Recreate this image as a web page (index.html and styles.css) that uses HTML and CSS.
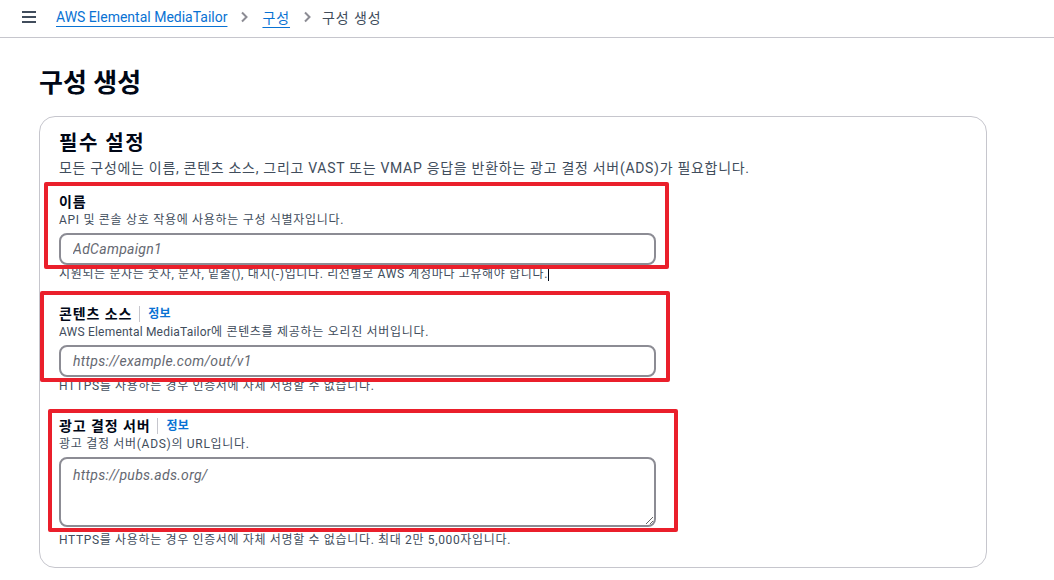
FILE: index.html
```html
<!DOCTYPE html>
<html lang="ko">
<head>
    <meta charset="UTF-8">
    <meta name="viewport" content="width=device-width, initial-scale=1.0">
    <title>구성 생성</title>
    <link rel="stylesheet" href="styles.css">
</head>
<body>
    <header class="topbar">
        <button class="menu-btn" aria-label="메뉴">
            <svg width="16" height="14" viewBox="0 0 16 14">
                <path d="M1 2h14M1 7h14M1 12h14" stroke="#414d5c" stroke-width="2" fill="none"/>
            </svg>
        </button>
        <nav class="breadcrumbs">
            <a href="#">AWS Elemental MediaTailor</a>
            <span class="chevron">
                <svg width="12" height="12" viewBox="0 0 12 12"><path d="M4 1.5l4.5 4.5L4 10.5" stroke="#8c8c94" stroke-width="2" fill="none"/></svg>
            </span>
            <a class="ko" href="#">구성</a>
            <span class="chevron">
                <svg width="12" height="12" viewBox="0 0 12 12"><path d="M4 1.5l4.5 4.5L4 10.5" stroke="#8c8c94" stroke-width="2" fill="none"/></svg>
            </span>
            <span class="current ko">구성 생성</span>
        </nav>
    </header>

    <main class="content">
        <h1 class="page-title">구성 생성</h1>

        <section class="panel">
            <h2 class="panel-title">필수 설정</h2>
            <p class="panel-desc">모든 구성에는 이름, 콘텐츠 소스, 그리고 VAST 또는 VMAP 응답을 반환하는 광고 결정 서버(ADS)가 필요합니다.</p>

            <div class="field">
                <div class="field-main mark mark-name">
                    <label class="field-label" for="name">이름</label>
                    <div class="field-desc">API 및 콘솔 상호 작용에 사용하는 구성 식별자입니다.</div>
                    <input class="text-input" id="name" type="text" placeholder="AdCampaign1">
                </div>
                <div class="field-hint">지원되는 문자는 숫자, 문자, 밑줄(), 대시(-)입니다. 리전별로 AWS 계정마다 고유해야 합니다.<span class="caret"></span></div>
            </div>

            <div class="field">
                <div class="field-main mark mark-source">
                    <div class="field-label">
                        <label for="source">콘텐츠 소스</label>
                        <span class="divider"></span>
                        <a class="info" href="#">정보</a>
                    </div>
                    <div class="field-desc"><span class="latin">AWS Elemental MediaTailor</span>에 콘텐츠를 제공하는 오리진 서버입니다.</div>
                    <input class="text-input" id="source" type="text" placeholder="https://example.com/out/v1">
                </div>
                <div class="field-hint">HTTPS를 사용하는 경우 인증서에 자체 서명할 수 없습니다.</div>
            </div>

            <div class="field">
                <div class="field-main mark mark-ads">
                    <div class="field-label">
                        <label for="ads">광고 결정 서버</label>
                        <span class="divider"></span>
                        <a class="info" href="#">정보</a>
                    </div>
                    <div class="field-desc">광고 결정 서버(ADS)의 URL입니다.</div>
                    <textarea class="text-area" id="ads" placeholder="https://pubs.ads.org/"></textarea>
                </div>
                <div class="field-hint field-hint-area">HTTPS를 사용하는 경우 인증서에 자체 서명할 수 없습니다. 최대 2만 5,000자입니다.</div>
            </div>
        </section>
    </main>
</body>
</html>
```

FILE: styles.css
```css
body {
    margin: 0;
    font-family: Roboto, "Noto Sans CJK KR", sans-serif;
    color: #000716;
    background-color: #fff;
}

.topbar {
    height: 37px;
    border-bottom: 1px solid #c6c6cd;
    display: flex;
    align-items: center;
    padding-left: 21px;
}

.menu-btn {
    border: none;
    background: none;
    padding: 0;
    width: 16px;
    height: 14px;
    display: flex;
    margin-top: -3px;
}

.breadcrumbs {
    display: flex;
    align-items: center;
    margin-left: 19px;
    font-size: 14px;
    margin-top: -3px;
}

.breadcrumbs a {
    color: #0972d3;
    text-decoration: underline;
    text-underline-offset: 4px;
}

.breadcrumbs .ko {
    letter-spacing: 0.9px;
}

.chevron {
    display: flex;
    margin: 0 12px 0 11px;
}

.current {
    color: #414d5c;
    margin-left: -3px;
}

.content {
    padding: 0 39px;
}

.page-title {
    margin: 30px 0 18px;
    font-size: 26px;
    line-height: 30px;
    font-weight: 700;
}

.panel {
    width: 948px;
    box-sizing: border-box;
    border: 1px solid #c6c6cd;
    border-radius: 16px;
    padding: 12px 19px 18px;
}

.panel-title {
    margin: 0;
    font-size: 20px;
    line-height: 28px;
    font-weight: 700;
    letter-spacing: 1.5px;
}

.panel-desc {
    margin: 0 0 14px;
    font-size: 14px;
    line-height: 22px;
    color: #414d5c;
    letter-spacing: 0.7px;
}

.field {
    width: 597px;
    margin-bottom: 22px;
}

.field:last-child {
    margin-bottom: 0;
}

.field-main {
    position: relative;
}

.field-label {
    display: flex;
    align-items: center;
    font-size: 14px;
    line-height: 18px;
    font-weight: 700;
    letter-spacing: 0.9px;
}

.divider {
    width: 1px;
    height: 16px;
    background-color: #c6c6cd;
    margin: 0 8px 0 7px;
}

.info {
    color: #0972d3;
    font-size: 12px;
    letter-spacing: 0.3px;
    text-decoration: none;
}

.field-desc {
    font-size: 12px;
    line-height: 18px;
    color: #414d5c;
    margin-bottom: 4px;
    letter-spacing: 0.7px;
}

.latin {
    letter-spacing: 0.2px;
}

.text-input, .text-area {
    display: block;
    width: 100%;
    box-sizing: border-box;
    border: 2px solid #8c8c94;
    border-radius: 8px;
    padding: 4px 12px;
    font-family: Roboto, "Noto Sans CJK KR", sans-serif;
    font-size: 14px;
    line-height: 20px;
    letter-spacing: 0.3px;
    outline: none;
}

.text-input {
    height: 32px;
}

.text-area {
    height: 70px;
    resize: vertical;
    padding-top: 6px;
}

.text-input::placeholder, .text-area::placeholder {
    color: #656871;
    font-style: italic;
}

.field-hint {
    font-size: 12px;
    line-height: 18px;
    color: #414d5c;
    letter-spacing: 0.65px;
}

.field-hint-area {
    margin-top: 4px;
}

.caret {
    display: inline-block;
    width: 1px;
    height: 15px;
    background-color: #000716;
    vertical-align: -3px;
}

/* red annotation frames drawn over the fields */
.mark::after {
    content: "";
    position: absolute;
    border: 4px solid #ea1f2b;
    border-radius: 2px;
    pointer-events: none;
}

.mark-name::after {
    top: -11px;
    left: -15px;
    right: -13px;
    bottom: -4px;
}

.mark-source::after {
    top: -14px;
    left: -19px;
    right: -14px;
    bottom: -5px;
}

.mark-ads::after {
    top: -8px;
    left: -11px;
    right: -22px;
    bottom: -5px;
}
```
